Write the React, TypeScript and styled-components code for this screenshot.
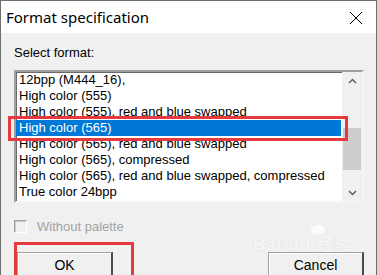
import React from 'react';
import styled, { createGlobalStyle } from 'styled-components';

const GlobalStyle = createGlobalStyle`
  html, body {
    margin: 0;
    padding: 0;
    background: #ffffff;
  }
  * {
    box-sizing: border-box;
  }
`;

const Window = styled.div`
  position: relative;
  width: 377px;
  height: 275px;
  overflow: hidden;
  display: flex;
  flex-direction: column;
  background: #f0f0f0;
  border: 1px solid #6f6f6f;
  border-bottom: none;
  font-family: 'Liberation Sans', Arial, sans-serif;
`;

const TitleBar = styled.div`
  height: 32px;
  flex: none;
  display: flex;
  align-items: center;
  justify-content: space-between;
  padding: 0 13px 1px 5px;
  background: #ffffff;
`;

const Title = styled.span`
  font-family: 'Noto Sans', sans-serif;
  font-size: 15px;
  color: #000000;
`;

const CloseIcon = styled.svg`
  width: 14px;
  height: 14px;
  margin-top: 2px;
`;

const Body = styled.div`
  flex: 1;
  display: flex;
  flex-direction: column;
  padding: 12px 12px 0 12px;
  font-size: 13px;
`;

const Label = styled.div`
  height: 15px;
  line-height: 15px;
  padding-left: 1px;
  color: #000000;
`;

const ListWrap = styled.div`
  position: relative;
  margin-top: 10px;
  margin-left: 1px;
`;

const ListBox = styled.div`
  height: 133px;
  display: flex;
  background: #ffffff;
  border: 2px solid;
  border-color: #a0a0a0 #f4f4f4 #f4f4f4 #a0a0a0;
  box-shadow: inset 1px 1px 0 #6a6a6a;
  overflow: hidden;
`;

const Items = styled.div`
  flex: 1;
  display: flex;
  flex-direction: column;
`;

const Item = styled.div<{ $selected?: boolean }>`
  height: 16px;
  line-height: 16px;
  padding-left: 3px;
  margin-right: 1px;
  white-space: nowrap;
  color: ${(p) => (p.$selected ? '#ffffff' : '#000000')};
  background: ${(p) => (p.$selected ? '#0078d7' : 'transparent')};
`;

const ScrollBar = styled.div`
  width: 20px;
  display: flex;
  flex-direction: column;
  background: #f0f0f0;
`;

const ScrollArrow = styled.div`
  height: 17px;
  display: flex;
  align-items: center;
  justify-content: center;
`;

const ScrollTrack = styled.div`
  flex: 1;
  display: flex;
  flex-direction: column;
  padding-top: 39px;
`;

const ScrollThumb = styled.div`
  height: 42px;
  margin: 0 1px;
  background: #cdcdcd;
`;

const Highlight = styled.div`
  position: absolute;
  border: 3px solid #e5393e;
  pointer-events: none;
`;

const CheckRow = styled.div`
  display: flex;
  align-items: center;
  gap: 10px;
  margin-top: 17px;
  margin-left: 1px;
  height: 13px;
  color: #a3a3a3;
`;

const CheckBox = styled.div`
  width: 13px;
  height: 13px;
  border: 1px solid;
  border-color: #a0a0a0 #ffffff #ffffff #a0a0a0;
  box-shadow: inset 1px 1px 0 #c8c8c8;
  background: #f0f0f0;
`;

const ButtonRow = styled.div`
  display: flex;
  justify-content: space-between;
  margin-top: 19px;
  padding: 0 0 0 4px;
`;

const ButtonSlot = styled.div`
  position: relative;
`;

const Button = styled.div`
  width: 96px;
  height: 26px;
  display: flex;
  align-items: center;
  justify-content: center;
  padding-bottom: 2px;
  background: #f0f0f0;
  border-top: 1px solid #a0a0a0;
  border-left: 1px solid #a0a0a0;
  border-right: 2px solid #4a4a4a;
  box-shadow: inset 1px 1px 0 #ffffff;
  font-size: 14px;
  color: #000000;
`;

const Watermark = styled.div`
  position: absolute;
  left: 252px;
  top: 224px;
  display: flex;
  flex-direction: column;
  align-items: center;
  color: rgba(255, 255, 255, 0.8);
  text-shadow: 0 0 1px rgba(190, 190, 190, 0.6);
  font-family: 'Liberation Sans', 'Noto Sans CJK SC', sans-serif;
  font-weight: 700;
  pointer-events: none;
`;

const Paw = styled.div`
  width: 14px;
  height: 10px;
  border-radius: 50%;
  background: rgba(255, 255, 255, 0.75);
  margin-left: 30px;
  margin-bottom: 1px;
`;

const MarkText = styled.span`
  font-size: 17px;
  line-height: 18px;
  letter-spacing: 1px;
`;

const formats = [
  '12bpp (M444_16),',
  'High color (555)',
  'High color (555), red and blue swapped',
  'High color (565)',
  'High color (565), red and blue swapped',
  'High color (565), compressed',
  'High color (565), red and blue swapped, compressed',
  'True color 24bpp',
];

const Chevron: React.FC<{ down?: boolean }> = ({ down }) => (
  <svg width="9" height="6" viewBox="0 0 9 6">
    <polyline
      points={down ? '1,1 4.5,4.5 8,1' : '1,5 4.5,1.5 8,5'}
      fill="none"
      stroke="#606060"
      strokeWidth="1.5"
    />
  </svg>
);

export default function App() {
  const selected = 3;
  return (
    <>
      <GlobalStyle />
      <Window>
        <TitleBar>
          <Title>Format specification</Title>
          <CloseIcon viewBox="0 0 14 14">
            <path d="M1 1 L13 13 M13 1 L1 13" stroke="#000" strokeWidth="1" fill="none" />
          </CloseIcon>
        </TitleBar>
        <Body>
          <Label>Select format:</Label>
          <ListWrap>
            <ListBox>
              <Items>
                {formats.map((f, i) => (
                  <Item key={f} $selected={i === selected}>
                    {f}
                  </Item>
                ))}
              </Items>
              <ScrollBar>
                <ScrollArrow>
                  <Chevron />
                </ScrollArrow>
                <ScrollTrack>
                  <ScrollThumb />
                </ScrollTrack>
                <ScrollArrow>
                  <Chevron down />
                </ScrollArrow>
              </ScrollBar>
            </ListBox>
            <Highlight style={{ left: -6, top: 46, width: 340, height: 25 }} />
          </ListWrap>
          <CheckRow>
            <CheckBox />
            <span>Without palette</span>
          </CheckRow>
          <ButtonRow>
            <ButtonSlot>
              <Button>OK</Button>
              <Highlight style={{ left: -3, top: -10, width: 120, height: 40 }} />
            </ButtonSlot>
            <ButtonSlot>
              <Button>Cancel</Button>
            </ButtonSlot>
          </ButtonRow>
        </Body>
        <Watermark>
          <Paw />
          <MarkText>Bai du 经验</MarkText>
        </Watermark>
      </Window>
    </>
  );
}
